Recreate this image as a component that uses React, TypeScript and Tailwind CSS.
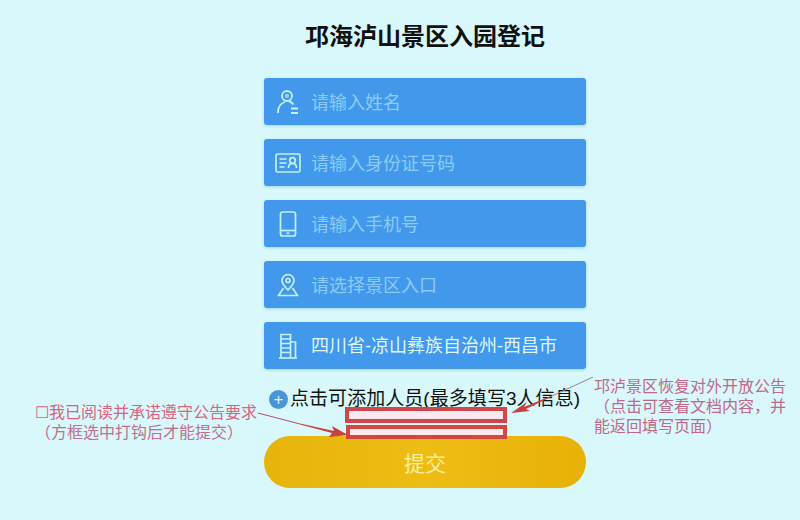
const cjk = "font-['Liberation_Sans','Noto_Sans_CJK_SC',sans-serif]";

function PersonIcon() {
  return (
    <svg width="24" height="26" viewBox="0 0 24 26" fill="none" stroke="#c4f0f8" strokeWidth="1.8">
      <circle cx="11" cy="7" r="5" />
      <circle cx="11" cy="7" r="2.200" fill="#c4f0f8" stroke="none" opacity="0.6" />
      <path d="M2 24c0-6 3-10 7-11" />
      <path d="M13 12.500c2 .4 3.500 1.300 4.500 3M15 19.500h7M15 24h7" />
    </svg>
  );
}

function CardIcon() {
  return (
    <svg width="26" height="20" viewBox="0 0 26 20" fill="none" stroke="#c4f0f8" strokeWidth="1.7">
      <rect x="1" y="1" width="24" height="18" rx="1.500" />
      <path d="M4.500 6h7M4.500 10h7M4.500 14h5" />
      <circle cx="17.500" cy="7.500" r="2.800" />
      <path d="M13.500 15c0-3 1.500-4.500 4-4.500s4 1.500 4 4.500" />
    </svg>
  );
}

function PhoneIcon() {
  return (
    <svg width="18" height="26" viewBox="0 0 18 26" fill="none" stroke="#c4f0f8" strokeWidth="1.7">
      <rect x="1.500" y="1" width="15" height="24" rx="2" />
      <path d="M1.500 19.500h15" />
      <path d="M7.500 22.300h3" />
    </svg>
  );
}

function PinIcon() {
  return (
    <svg width="22" height="24" viewBox="0 0 22 24" fill="none" stroke="#c4f0f8" strokeWidth="1.7">
      <path d="M11 17C7.500 13.500 5 10.800 5 7.500a6 6 0 0 1 12 0c0 3.300-2.500 6-6 9.500z" />
      <circle cx="11" cy="7.500" r="2" />
      <path d="M6.500 15 1.500 22.500h19L15.500 15" />
    </svg>
  );
}

function BuildingIcon() {
  return (
    <svg width="18" height="26" viewBox="0 0 18 26" fill="none" stroke="#c4f0f8" strokeWidth="1.7">
      <path d="M2 25V1.500h9.500V25" />
      <path d="M11.500 9h5v16" />
      <path d="M0 25h18" />
      <path d="M2 6h9.500M2 10.500h9.500M2 15h9.500M2 19.500h9.500" />
    </svg>
  );
}

function Field({ icon, text, filled }: { icon: React.ReactNode; text: string; filled?: boolean }) {
  return (
    <div className="flex h-[47px] items-center rounded-[3px] bg-[#4299ec] shadow-[0_1px_3px_rgba(60,140,210,0.35)]">
      <div className="flex w-[47px] shrink-0 justify-center">{icon}</div>
      <span className={filled ? "mt-[2px] text-[18px] text-[#dff7fb]" : "mt-[3px] text-[18px] text-[#8ccaf6]"}>{text}</span>
    </div>
  );
}

export default function App() {
  return (
    <div className={`relative h-[520px] w-[800px] overflow-hidden bg-[#d9f8fb] ${cjk}`}>
      <div className="flex w-[322px] translate-x-[264px] flex-col">
        <h1 className="mt-[20px] h-[38px] text-center text-[24px] leading-[34px] font-bold text-[#111]">
          邛海泸山景区入园登记
        </h1>
        <div className="mt-[20px] flex flex-col gap-[14px]">
          <Field icon={<PersonIcon />} text="请输入姓名" />
          <Field icon={<CardIcon />} text="请输入身份证号码" />
          <Field icon={<PhoneIcon />} text="请输入手机号" />
          <Field icon={<PinIcon />} text="请选择景区入口" />
          <Field icon={<BuildingIcon />} text="四川省-凉山彝族自治州-西昌市" filled />
        </div>
        <div className="mt-[17px] flex h-[26px] items-center whitespace-nowrap text-[19px] text-[#111]">
          <span className="mr-[2px] ml-[5px] flex h-[19px] w-[19px] items-center justify-center rounded-full bg-[#4a94dc] text-[17px] leading-none text-[#dff3fb]">
            +
          </span>
          <span className="tracking-[0.05px]">点击可添加人员(最多填写3人信息)</span>
        </div>
        <button className="mt-[24px] h-[52px] rounded-[26px] bg-gradient-to-r from-[#e6b40a] via-[#eebd14] to-[#e8b106] pt-[3px] text-[21px] text-[#fbeea0]">
          提交
        </button>
      </div>

      {/* callout notes */}
      <div className="absolute top-[403px] left-[35px] text-[16px] leading-[20px] whitespace-nowrap text-[#d8647e]">
        <div>☐我已阅读并承诺遵守公告要求</div>
        <div className="text-[#c0708c]">（方框选中打钩后才能提交）</div>
      </div>
      <div className="absolute top-[377px] left-[594px] w-[200px] text-[16px] leading-[20px] text-[#c0688a]">
        <div className="whitespace-nowrap">邛泸景区恢复对外开放公告</div>
        <div className="whitespace-nowrap">（点击可查看文档内容，并</div>
        <div className="whitespace-nowrap">能返回填写页面）</div>
      </div>

      <div className="absolute top-[407px] left-[345px] h-[16px] w-[162px] border-[4px] border-[#cf474c] bg-[#fbe9ee]" />
      <div className="absolute top-[425px] left-[346px] h-[14px] w-[161px] border-[4px] border-[#d2483f] bg-[#fbe9ee]" />

      <svg className="absolute inset-0" width="800" height="520" fill="none">
        <path d="M258 413 300 424" stroke="#a85070" strokeWidth="1" />
        <path d="M300 423.500 334 431 332 426 348 435 329 437 332 433 300 424.500z" fill="#c8403f" />
        <path d="M593 377 552 396" stroke="#8a8a9a" strokeWidth="1" />
        <path d="M552 395.500 524 407 527 402 511 413 530 411 526 409 552 396.500z" fill="#c8403f" />
      </svg>
    </div>
  );
}
